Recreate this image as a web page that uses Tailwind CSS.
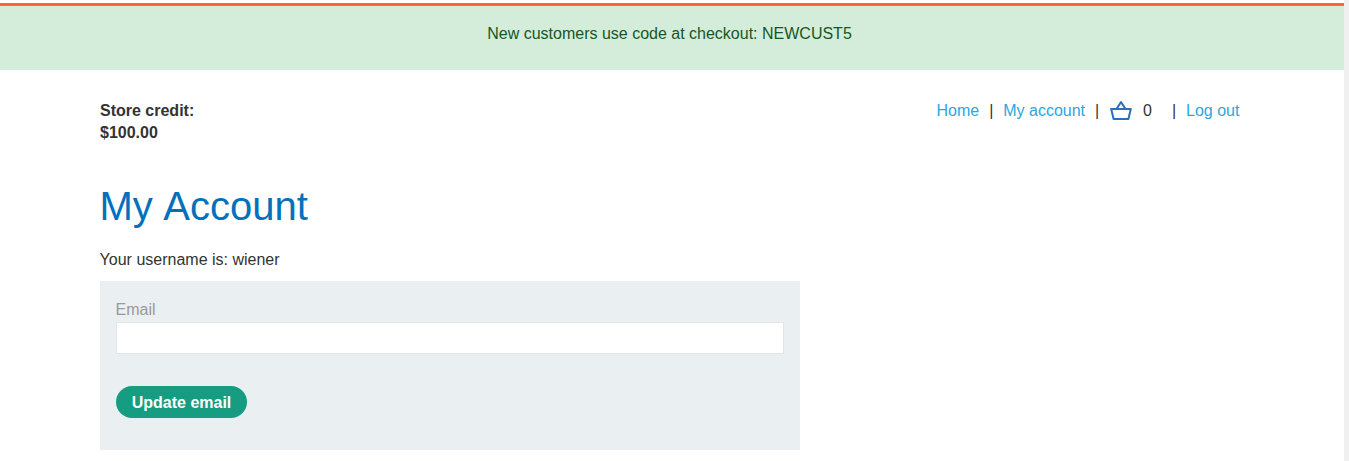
<!DOCTYPE html>
<html lang="en">
<head>
<meta charset="utf-8">
<title>My Account</title>
<script src="https://cdn.jsdelivr.net/npm/@tailwindcss/browser@4"></script>
</head>
<body class="flex h-[461px] overflow-hidden bg-white font-['Liberation_Sans',Arial,sans-serif] text-base text-[#333332]">
  <div class="flex-1 pt-[3px]">
    <div class="h-[67px] border-t-3 border-[#ff6633] bg-[#d4edda] pt-4 pr-[5px] text-center text-[#155724]">New customers use code at checkout: NEWCUST5</div>
    <div class="ml-[100px] w-[1140px]">
      <header class="flex items-start justify-between pt-[30px]">
        <p class="font-bold leading-[22px]">Store credit:<br>$100.00</p>
        <nav class="mr-[0.6px] flex h-[22px] items-center leading-[22px]">
          <a href="#" class="text-[#29a7df]">Home</a>
          <span class="ml-[10px] w-[14px]">|</span>
          <a href="#" class="text-[#29a7df]">My account</a>
          <span class="ml-[10px] w-[15px]">|</span>
          <a href="#" aria-label="Cart" class="pb-[2px]"><svg class="block h-5 w-[22px]" viewBox="0 0 22 20" fill="none" stroke="#2b6fb9" stroke-width="2"><path d="M1.2 9H20.8L18.4 19H3.6Z M6.5 9L11 2L15.5 9" stroke-linejoin="round"/></svg></a>
          <span class="ml-[11px] w-[29px]">0</span>
          <span class="w-[14px]">|</span>
          <a href="#" class="text-[#29a7df]">Log out</a>
        </nav>
      </header>
      <h1 class="mt-[37px] -ml-[0.5px] text-[40px] leading-[50px] [word-spacing:1.6px] text-[#0071bc]">My Account</h1>
      <p class="mt-[18px] -ml-[0.4px] leading-[22px]">Your username is: wiener</p>
      <form class="mt-[10px] h-[169px] w-[700px] bg-[#eaf0f2] px-4 pt-[18px]">
        <label for="email" class="-ml-[0.4px] block leading-[22px] text-[#999999]">Email</label>
        <input id="email" type="email" class="mt-px block h-8 w-full border border-[#e4e4e4] bg-white px-2">
        <button type="button" class="mt-8 block h-8 w-[131px] rounded-full bg-[#169c80] pt-[2px] font-bold text-white">Update email</button>
      </form>
    </div>
  </div>
  <div class="w-[5px] bg-[#f0f0f0]"></div>
</body>
</html>
